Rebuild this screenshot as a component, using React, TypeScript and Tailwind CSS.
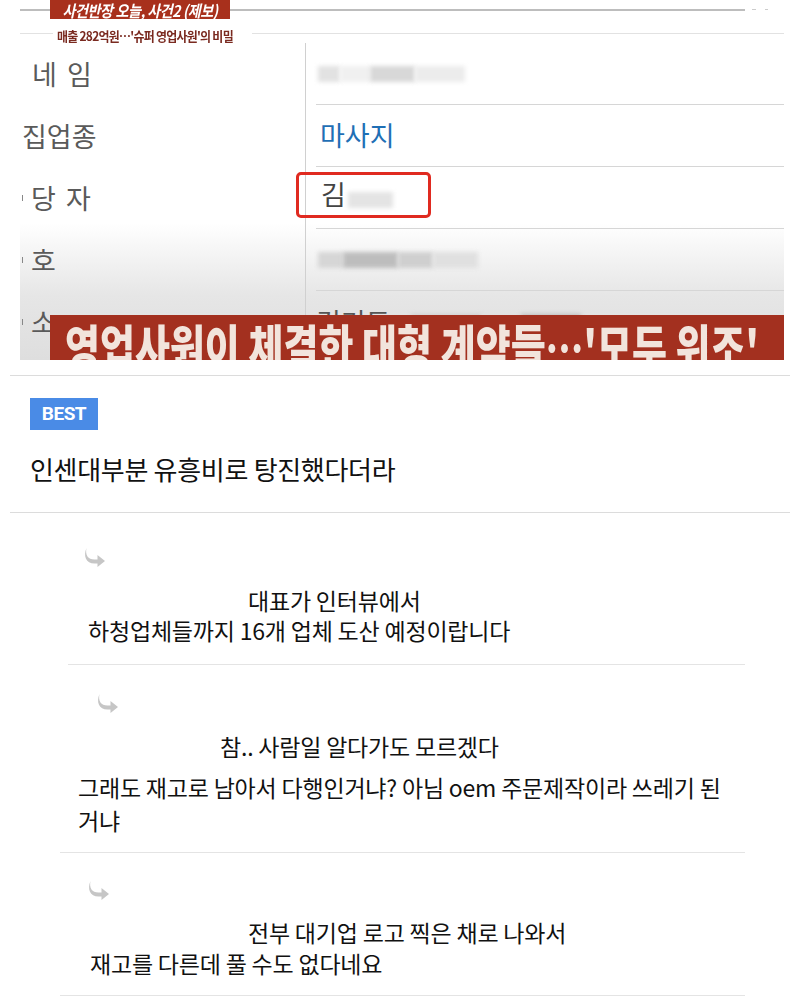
import React from "react";

const ReplyArrow = () => (
  <svg width="24" height="22" viewBox="0 0 24 22" className="block">
    <path
      d="M3.5 1 C2 8 5 12.5 11.5 12.5 L14.5 12.5 L14.5 8 L22 14 L14.5 20 L14.5 16.5 L11.5 16.5 C3 16.5 0 9 3.5 1 Z"
      fill="#c6c6c6"
    />
  </svg>
);

const Blur = ({ w, shade }: { w: number; shade: string }) => (
  <div className={`h-[16px] ${shade} blur-[2px]`} style={{ width: w }} />
);

const Row = ({
  label,
  right,
  line = true,
}: {
  label: React.ReactNode;
  right: React.ReactNode;
  line?: boolean;
}) => (
  <div className="grid grid-cols-[285px_1fr] h-[62px]">
    <div className="flex items-center pl-[12px] text-[27px] text-[#5a5a5a] tracking-[2px]">{label}</div>
    <div className="border-l border-[#d0d0d0] pl-[10px] flex flex-col">
      <div className="flex-1 flex items-center">{right}</div>
      {line && <div className="h-px bg-[#d6d6d6]" />}
    </div>
  </div>
);

export default function App() {
  return (
    <div className="w-[800px] h-[1000px] bg-white overflow-hidden font-['Noto_Sans_CJK_KR','Noto_Sans',sans-serif] text-[#111]">
      {/* video frame */}
      <div className="ml-[20px] w-[764px] h-[360px] relative overflow-hidden bg-[linear-gradient(to_bottom,#ffffff_0%,#ffffff_62%,#e6e6e6_82%,#dedede_100%)]">
        {/* header lines */}
        <div className="h-[45px] relative">
          <div className="absolute left-0 top-[9px] w-[725px] h-[2px] bg-[#bdbdbd]" />
          <div className="absolute left-[732px] top-[9px] w-[4px] h-[1px] bg-[#ccc]" />
          <div className="absolute left-[745px] top-[9px] w-[3px] h-[1px] bg-[#ccc]" />
          <div className="absolute left-0 top-[33px] w-[764px] h-px bg-[#e2e2e2]" />
          <div className="absolute left-[30px] top-0 w-[180px] h-[19px] bg-[#a8301c] flex items-center justify-center overflow-hidden">
            <span className="inline-block scale-x-[0.88] text-white italic font-bold text-[16px] leading-none tracking-[-0.5px] whitespace-nowrap">사건반장 오늘, 사건2 (제보)</span>
          </div>
          <div className="absolute left-[33px] top-[22px] bg-white px-[4px]">
            <span className="inline-block origin-left scale-x-[0.92] text-[#7a2a20] font-bold text-[13px] leading-none tracking-[-0.8px] whitespace-nowrap">매출 282억원…'슈퍼 영업사원'의 비밀</span>
          </div>
        </div>
        {/* table */}
        <div className="-mt-[2px]">
          <Row
            label={<span>네 임</span>}
            right={
              <div className="flex gap-0 ml-[2px]">
                <Blur w={22} shade="bg-[#e2e2e2]" />
                <Blur w={30} shade="bg-[#f0f0f0]" />
                <Blur w={45} shade="bg-[#d8d8d8]" />
                <Blur w={50} shade="bg-[#ececec]" />
              </div>
            }
          />
          <Row
            label={<span className="-ml-[10px] tracking-normal">집업종</span>}
            right={<span className="ml-[4px] text-[27px] text-[#1f6fb5]">마사지</span>}
          />
          <Row
            label={
              <span className="flex items-center">
                <span className="-ml-[10px] mr-[8px] w-px h-[6px] bg-[#888]" />
                당 자
              </span>
            }
            right={
              <div className="flex items-center -ml-[20px] -mt-[6px] w-[135px] h-[46px] border-[3px] border-[#e02a20] rounded-[5px] pl-[22px]">
                <span className="text-[27px] text-[#444]">김</span>
                <div className="ml-[2px] mt-[10px]">
                  <Blur w={45} shade="bg-[#e4e4e4]" />
                </div>
              </div>
            }
          />
          <Row
            label={
              <span className="flex items-center">
                <span className="-ml-[10px] mr-[8px] w-px h-[6px] bg-[#888]" />
                호
              </span>
            }
            right={
              <div className="flex ml-[2px]">
                <Blur w={25} shade="bg-[#d6d6d6]" />
                <Blur w={55} shade="bg-[#bdbdbd]" />
                <Blur w={35} shade="bg-[#cfcfcf]" />
                <Blur w={45} shade="bg-[#e0e0e0]" />
              </div>
            }
          />
          <Row
            label={
              <span className="flex items-center">
                <span className="-ml-[10px] mr-[8px] w-px h-[6px] bg-[#888]" />
                소
              </span>
            }
            right={
              <div className="flex items-center">
                <span className="text-[27px] text-[#555]">경기도</span>
                <div className="ml-[20px] flex">
                  <Blur w={70} shade="bg-[#cfcfcf]" />
                  <Blur w={40} shade="bg-[#e0e0e0]" />
                  <Blur w={60} shade="bg-[#bcbcbc]" />
                </div>
              </div>
            }
            line={false}
          />
        </div>
        {/* bottom caption banner */}
        <div className="absolute left-[30px] right-0 top-[315px] h-[60px] bg-[#a3301f] overflow-hidden">
          <div className="pl-[15px] whitespace-nowrap">
            <span className="inline-block origin-left scale-x-[0.76] text-[50px] font-black leading-[60px] text-[#f2e4dc]">
              영업사원이 체결한 대형 계약들…'모두 위조'
            </span>
          </div>
        </div>
      </div>

      {/* comments */}
      <div className="mx-[10px] mt-[15px] h-px bg-[#dcdcdc]" />
      <div className="pl-[30px] pt-[22px] pb-[24px]">
        <div className="w-[68px] h-[32px] bg-[#4a8be6] flex items-center justify-center">
          <span className="text-white font-bold text-[19px] font-['Roboto','Liberation_Sans',sans-serif] tracking-[-0.5px]">BEST</span>
        </div>
        <div className="mt-[20px] text-[26px] leading-[38px] tracking-[-0.3px]">인센대부분 유흥비로 탕진했다더라</div>
      </div>
      <div className="mx-[10px] h-px bg-[#dcdcdc]" />

      <div className="pt-[34px]">
        <div className="pl-[83px]">
          <ReplyArrow />
        </div>
        <div className="pl-[88px] mt-[16px] text-[23px] leading-[30px] tracking-[-0.2px]">
          <div className="pl-[160px]">대표가 인터뷰에서</div>
          <div>하청업체들까지 16개 업체 도산 예정이랍니다</div>
        </div>
        <div className="ml-[68px] w-[677px] mt-[19px] h-px bg-[#e4e4e4]" />
      </div>

      <div className="pt-[28px]">
        <div className="pl-[96px]">
          <ReplyArrow />
        </div>
        <div className="pl-[78px] mt-[16px] text-[23px] tracking-[-0.2px]">
          <div className="pl-[142px] leading-[30px]">참.. 사람일 알다가도 모르겠다</div>
          <div className="mt-[10px] w-[660px] leading-[33px]">그래도 재고로 남아서 다행인거냐? 아님 oem 주문제작이라 쓰레기 된 거냐</div>
        </div>
        <div className="ml-[60px] w-[685px] mt-[15px] h-px bg-[#e4e4e4]" />
      </div>

      <div className="pt-[27px]">
        <div className="pl-[87px]">
          <ReplyArrow />
        </div>
        <div className="pl-[90px] mt-[15px] text-[23px] leading-[31px] tracking-[-0.2px]">
          <div className="pl-[158px]">전부 대기업 로고 찍은 채로 나와서</div>
          <div>재고를 다른데 풀 수도 없다네요</div>
        </div>
        <div className="ml-[60px] w-[685px] mt-[16px] h-px bg-[#e4e4e4]" />
      </div>
    </div>
  );
}
